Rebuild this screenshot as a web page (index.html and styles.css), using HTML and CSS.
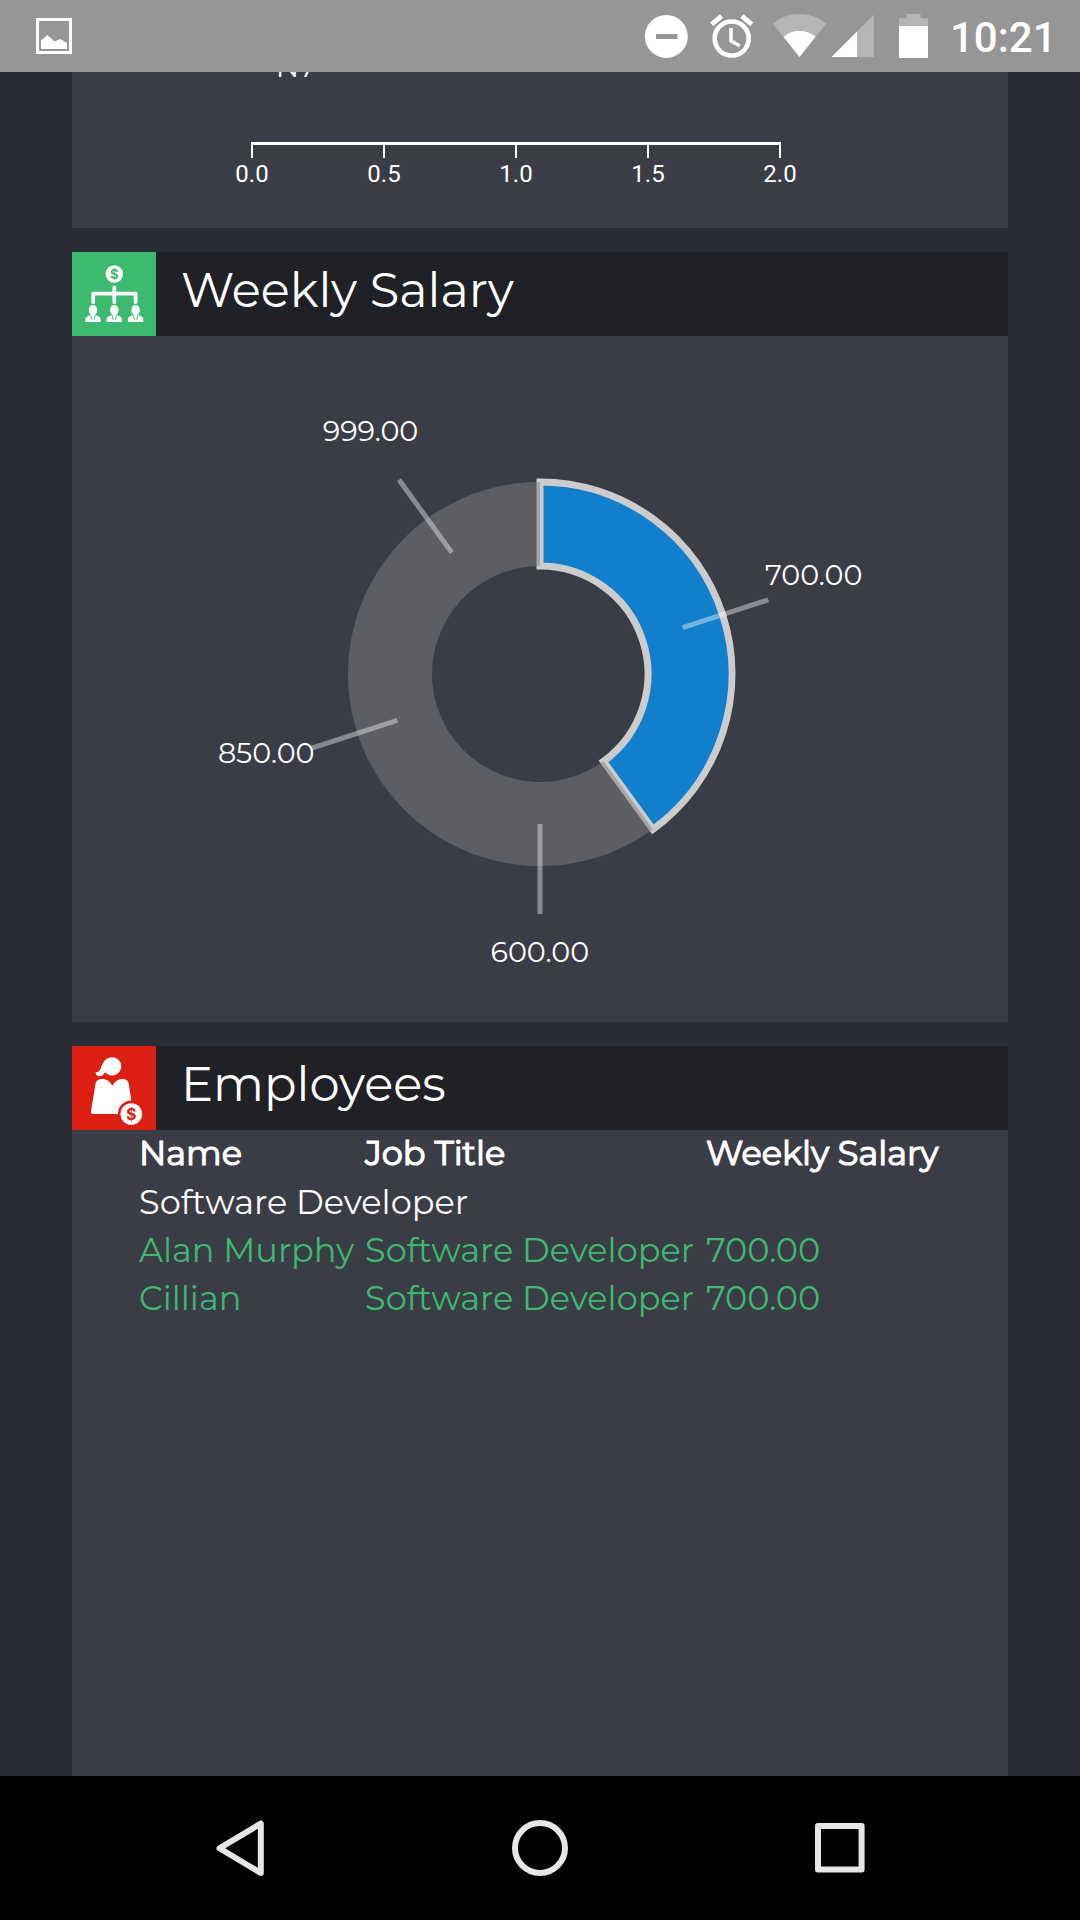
FILE: index.html
```
<!DOCTYPE html>
<html lang="en">
<head>
<meta charset="utf-8">
<title>Weekly Salary</title>
<link rel="stylesheet" href="styles.css">
</head>
<body>
<header class="status">
  <svg class="status-left" width="36" height="36" viewBox="0 0 36 36"><path d="M1.5 1.5h33v33h-33z" fill="none" stroke="#fff" stroke-width="3"/><path d="M5 22.500l6.500-5.500 7 6.500 5.500-2.500 7 4v6H5z" fill="#fff"/></svg>
  <svg class="status-icons" width="300" height="72" viewBox="640 0 300 72">
    <circle cx="666.300" cy="36.400" r="21.500" fill="#fff"/><path d="M656 34h21.500v5H656z" fill="#969696"/>
    <circle cx="731.700" cy="38.500" r="17" fill="none" stroke="#fff" stroke-width="4.600"/>
    <path d="M731 28v13l8.700 4.800" fill="none" stroke="#fff" stroke-width="3.500"/>
    <path d="M711.700 24.300l9.800-8.200M741.900 16.100l9.800 8.200" stroke="#fff" stroke-width="4.800"/>
    <path d="M799.500 57L772.800 23.800Q784 14 799.500 14t26.700 9.800z" fill="#b5b5b5"/>
    <path d="M799.500 57L783.500 36.700Q790 31 799.500 31t16 5.700z" fill="#fff"/>
    <path d="M831.500 57L874 14.500V57z" fill="#b5b5b5"/><path d="M831.500 57L857 31.500V57z" fill="#fff"/>
    <path d="M899 26v-7.700h7.500V14h14v4.300h7.500V26z" fill="#b5b5b5"/><path d="M899 26h29v32h-29z" fill="#fff"/>
  </svg>
  <span class="clock">10:21</span>
</header>

<main class="screen">
  <section class="card card-axis">
    <svg class="chart" width="936" height="156" viewBox="72 72 936 156">
      <text class="labels" x="275.700" y="77">N7</text>
      <g class="axis-text" text-anchor="middle">
        <text x="252" y="182.300">0.0</text><text x="384" y="182.300">0.5</text><text x="516" y="182.300">1.0</text><text x="648" y="182.300">1.5</text><text x="780" y="182.300">2.0</text>
      </g>
      <path d="M251 142h530v3H251z" fill="#fff"/>
      <path d="M252 143v15M384 143v15M516 143v15M648 143v15M780 143v15" stroke="#fff" stroke-width="2"/>
    </svg>
  </section>

  <section class="card card-salary">
    <div class="card-head">
      <svg class="badge badge-green" viewBox="0 0 84 84">
        <circle cx="42.300" cy="22" r="8.700" fill="#fff"/>
        <text class="coin" x="42.300" y="26.800" font-size="13">$</text>
        <path d="M42.300 35.500v14.500M21.200 50v-8.300h42.400V50" fill="none" stroke="#fff" stroke-width="3.800" stroke-linecap="round" stroke-linejoin="round"/>
        <g id="person" fill="#fff">
          <path d="M21 53c2.700 0 4.200 2 4.200 5s-1.700 5.500-4.200 5.500-4.200-2.500-4.200-5.500 1.500-5 4.200-5z"/>
          <path d="M13.300 70v-2.500c0-2.600 2.400-3.600 5.200-4.300h5c2.800.700 5.200 1.700 5.200 4.300V70z"/>
          <path d="M18.800 63.500l1.200 4.300M23.200 63.500L22 67.800" stroke="#3bba70" stroke-width="1" fill="none"/>
        </g>
        <use href="#person" x="21.300"/><use href="#person" x="42.600"/>
      </svg>
      <h2>Weekly Salary</h2>
    </div>
    <svg class="chart" width="936" height="686" viewBox="72 336 936 686">
      <path d="M540 482A192 192 0 0 1 652.850 829.330L603.480 761.370A108 108 0 0 0 540 566z" fill="#117fcc" stroke="#ccc" stroke-width="7"/>
      <path d="M652.850 829.330A192 192 0 1 1 540 482V566A108 108 0 1 0 603.480 761.370z" fill="#808080" fill-opacity=".5"/>
      <path d="M427.150 829.330L476.520 761.370M357.400 614.670L437.290 640.630" stroke="#57585c" stroke-width=".4"/>
      <path d="M451.800 552.600L399 479.800M682.700 627.600L768.300 599.800M397.300 720.400L311.700 748.200M540 824V914" stroke="#fff" stroke-opacity=".4" stroke-width="5"/>
      <g class="labels" text-anchor="middle">
        <text x="370.500" y="441">999.00</text><text x="813.700" y="585">700.00</text><text x="266.200" y="763">850.00</text><text x="539.800" y="962">600.00</text>
      </g>
    </svg>
  </section>

  <section class="card card-employees">
    <div class="card-head">
      <svg class="badge badge-red" viewBox="0 0 84 84">
        <path d="M40 11.200c5.300 0 9.300 4 9.300 9s-4 9.200-9.200 9.200c-2.900 0-5.300-1.200-7-3.200-1.300 1.800-3 4-5.900 4-1.800 0-3-1-3.400-2.500l.700.100-1.300-1.300c4-.2 5-2.500 6.200-6 2-5.800 5.400-9.300 10.600-9.300z" fill="#fff"/>
        <path d="M23.500 38c.5-3.500 3-5 6.500-5 5 0 8 2.600 10.200 6.900C43 35.500 46 33 50.500 33c3.500 0 5.800 1.800 6.300 5l2.500 16.500c-7 .2-13.500 5.500-13.300 13.500H21.500c-1.800 0-2.700-1-2.500-2.800z" fill="#fff"/>
        <circle cx="59.300" cy="68" r="10.800" fill="#fff"/>
        <text class="coin coin-red" x="59.300" y="73.500" font-size="15.500">$</text>
      </svg>
      <h2>Employees</h2>
    </div>
    <div class="table">
      <div class="row row-head"><span>Name</span><span>Job Title</span><span>Weekly Salary</span></div>
      <div class="row"><span class="wide">Software Developer</span></div>
      <div class="row row-green"><span>Alan Murphy</span><span>Software Developer</span><span>700.00</span></div>
      <div class="row row-green"><span>Cillian</span><span>Software Developer</span><span>700.00</span></div>
    </div>
  </section>
</main>

<nav class="nav">
  <svg width="1080" height="144" viewBox="0 1776 1080 144" fill="none" stroke="#e6e6e6" stroke-width="6" stroke-linejoin="round">
    <path d="M260.800 1823.500v49.500L219.500 1848.300z"/>
    <circle cx="540" cy="1848" r="25"/>
    <path d="M818 1826h43.600v43.600H818z"/>
  </svg>
</nav>
</body>
</html>
```

FILE: styles.css
```
* { box-sizing: border-box; }
body {
  margin: 0;
  width: 1080px;
  height: 1920px;
  overflow: hidden;
  display: flex;
  flex-direction: column;
  background: #2b2d36;
  color: #fff;
  font-family: Montserrat, Inter, "Open Sans", sans-serif;
}
svg { display: block; flex: none; }

.status {
  height: 72px;
  flex: none;
  display: flex;
  align-items: center;
  padding: 0 27px 0 36px;
  background: #969696;
}
.status-icons { margin-left: auto; }
.clock {
  width: 113px;
  padding: 4px 0 0 10px;
  font: 500 42px/72px Roboto, sans-serif;
}

.screen {
  flex: 1;
  min-height: 0;
  padding: 0 72px;
  display: flex;
  flex-direction: column;
  overflow: hidden;
}
.card { background: #3b3d46; flex: none; }
.card-axis { height: 156px; margin-bottom: 24px; }
.card-salary { height: 770px; margin-bottom: 24px; }
.card-employees { flex: 1; }
.axis-text { font: 400 24px Roboto, sans-serif; fill: #fff; }
.labels { font-size: 28.6px; fill: #fff; }

.card-head {
  height: 84px;
  display: flex;
  background: #202126;
}
.badge { width: 84px; height: 84px; }
.badge-green { background: #3bba70; }
.badge-red { background: #db1f12; }
.coin {
  font-family: Inter, sans-serif;
  font-weight: 700;
  text-anchor: middle;
  fill: #3bba70;
}
.coin-red { fill: #db1f12; }
h2 {
  margin: 0;
  padding-left: 25px;
  font-size: 48px;
  font-weight: 400;
  line-height: 77px;
}

.table { padding-left: 67px; font-size: 33.55px; line-height: 48px; }
.row {
  display: grid;
  grid-template-columns: 226px 341px 1fr;
  height: 48px;
  white-space: nowrap;
}
.wide { grid-column: 1 / -1; }
.row-head { line-height: 46px; -webkit-text-stroke: 1.2px #fff; }
.row-green { color: #3bba70; }

.nav { height: 144px; flex: none; background: #000; }
```
